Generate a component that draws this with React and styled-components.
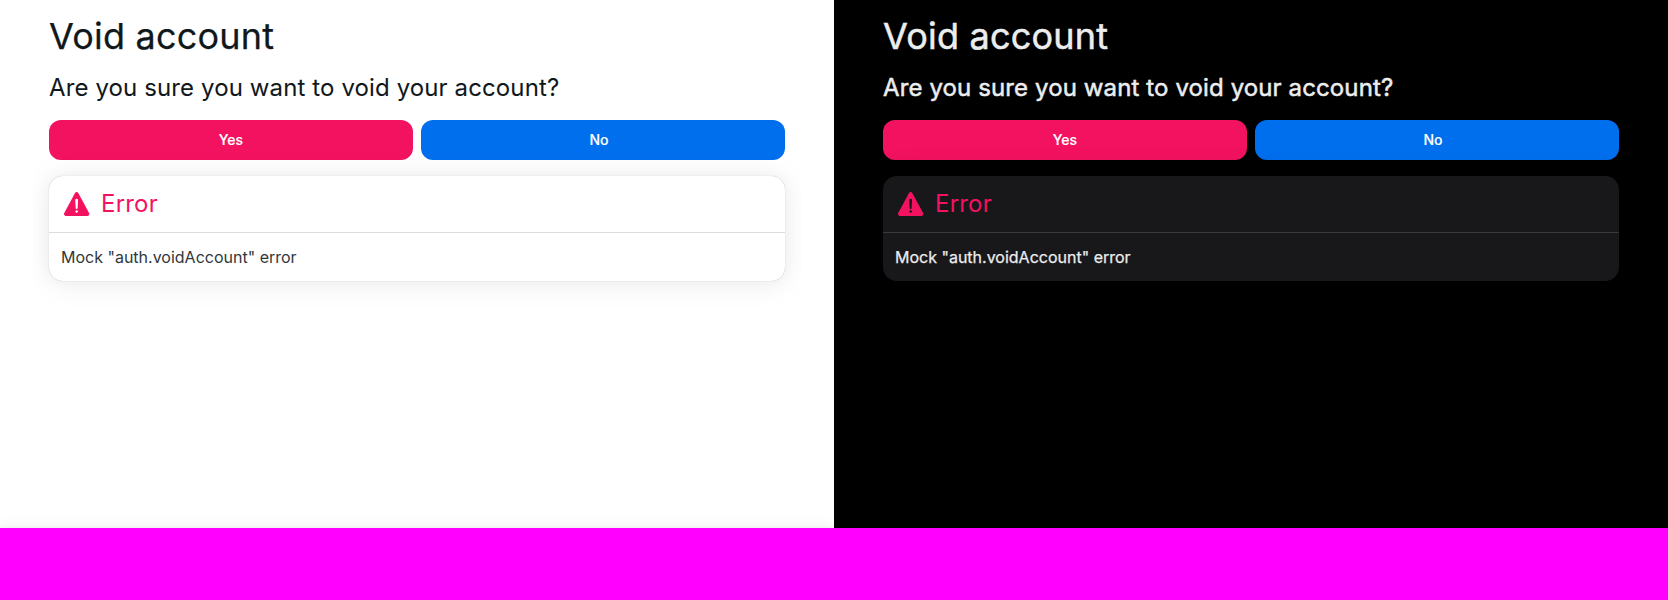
import React from "react";
import styled, { createGlobalStyle, ThemeProvider } from "styled-components";
import { IoWarning } from "react-icons/io5";

const GlobalStyle = createGlobalStyle`
  *, *::before, *::after { box-sizing: border-box; }
  body {
    margin: 0;
    background: #ff00ff;
    font-family: Inter, "Liberation Sans", sans-serif;
    -webkit-font-smoothing: antialiased;
  }
`;

const light = {
  background: "#ffffff",
  foreground: "#11181c",
  bodyText: "#30373b",
  card: "#ffffff",
  divider: "rgba(17, 17, 17, 0.15)",
  titleStroke: "0.25px",
  questionStroke: "0.05px",
  bodyStroke: "0",
  shadow:
    "0 0 15px 0 rgba(0,0,0,.03), 0 2px 30px 0 rgba(0,0,0,.08), 0 0 1px 0 rgba(0,0,0,.3)",
  footerShadow: "0 0 5px 0 rgba(0,0,0,.04), 0 0 14px 0 rgba(0,0,0,.08)",
};

const dark = {
  background: "#000000",
  foreground: "#ecedee",
  bodyText: "#ecedee",
  card: "#18181b",
  divider: "rgba(255, 255, 255, 0.15)",
  titleStroke: "0.5px",
  questionStroke: "0.5px",
  bodyStroke: "0.25px",
  shadow: "0 0 15px 0 rgba(0,0,0,.06), 0 2px 30px 0 rgba(0,0,0,.22)",
  footerShadow: "none",
};

const Screens = styled.div`
  display: grid;
  grid-template-columns: 1fr 1fr;
  height: 528px;
  overflow: hidden;
`;

const Screen = styled.div`
  display: flex;
  flex-direction: column;
  align-items: center;
  height: 528px;
  background: ${({ theme }) => theme.background};
  color: ${({ theme }) => theme.foreground};
  overflow: hidden;
`;

const Main = styled.main`
  display: flex;
  flex: 1;
  flex-direction: column;
  gap: 16px;
  width: 768px;
  padding: 16px;
  overflow: hidden;
`;

const Footer = styled.footer`
  flex: none;
  align-self: stretch;
  height: 64px;
  margin-bottom: -64px;
  box-shadow: ${({ theme }) => theme.footerShadow};
`;

const Title = styled.h1`
  margin: 0;
  font-size: 36px;
  line-height: 40px;
  font-weight: 400;
  letter-spacing: 0.21px;
  -webkit-text-stroke: ${({ theme }) => theme.titleStroke} currentColor;
`;

const Question = styled.h2`
  margin: 0;
  font-size: 24px;
  line-height: 32px;
  font-weight: 400;
  letter-spacing: 0.115px;
  -webkit-text-stroke: ${({ theme }) => theme.questionStroke} currentColor;
`;

const Actions = styled.div`
  display: grid;
  grid-template-columns: 1fr 1fr;
  gap: 8px;
`;

const tones = { danger: "#f31260", primary: "#006fee" };

const Button = styled.button`
  display: flex;
  align-items: center;
  justify-content: center;
  gap: 8px;
  height: 40px;
  padding: 0 16px;
  border: 0;
  border-radius: 12px;
  background: ${({ $tone }) => tones[$tone]};
  color: #ffffff;
  font: 500 14px/20px Inter, "Liberation Sans", sans-serif;
  -webkit-text-stroke: 0.15px currentColor;
`;

const EndContent = styled.span`
  width: 0;
`;

const Card = styled.section`
  border-radius: 14px;
  background: ${({ theme }) => theme.card};
  box-shadow: ${({ theme }) => theme.shadow};
`;

const CardHeader = styled.header`
  display: flex;
  align-items: center;
  gap: 8px;
  padding: 12px;
  color: #f31260;
  font-size: 24px;
  line-height: 32px;
  letter-spacing: 0.2px;
`;

const Divider = styled.hr`
  height: 1px;
  margin: 0;
  border: 0;
  background: ${({ theme }) => theme.divider};
`;

const CardBody = styled.div`
  padding: 12px;
  color: ${({ theme }) => theme.bodyText};
  font-size: 16px;
  line-height: 24px;
  -webkit-text-stroke: ${({ theme }) => theme.bodyStroke} currentColor;
`;

function VoidAccount({ theme }) {
  return (
    <ThemeProvider theme={theme}>
      <Screen>
        <Main>
          <Title>Void account</Title>
          <Question>Are you sure you want to void your account?</Question>
          <Actions>
            <Button $tone="danger">Yes</Button>
            <Button $tone="primary">
              No
              <EndContent />
            </Button>
          </Actions>
          <Card>
            <CardHeader>
              <IoWarning size={32} />
              <span>Error</span>
            </CardHeader>
            <Divider />
            <CardBody>Mock "auth.voidAccount" error</CardBody>
          </Card>
        </Main>
        <Footer />
      </Screen>
    </ThemeProvider>
  );
}

export default function App() {
  return (
    <>
      <GlobalStyle />
      <Screens>
        <VoidAccount theme={light} />
        <VoidAccount theme={dark} />
      </Screens>
    </>
  );
}
